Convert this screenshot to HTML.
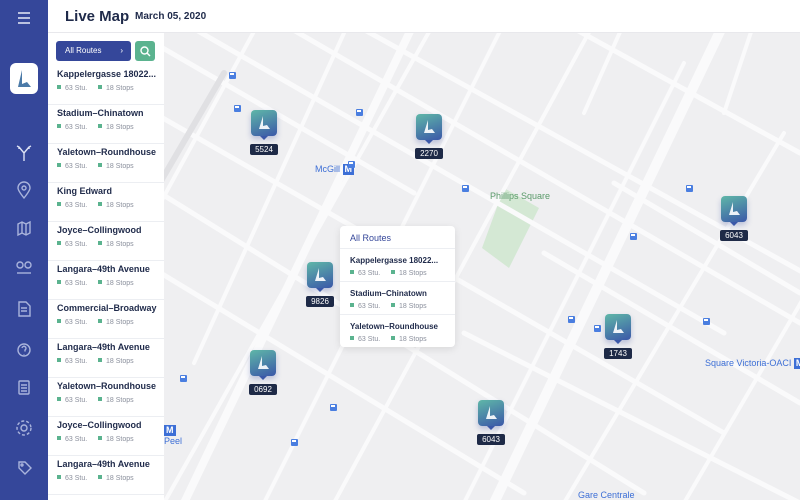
<!DOCTYPE html>
<html><head><meta charset="utf-8"><style>
*{margin:0;padding:0;box-sizing:border-box}
html,body{width:800px;height:500px;overflow:hidden}
body{font-family:"Liberation Sans",sans-serif;background:#efeff1;position:relative}
.side{position:absolute;left:0;top:0;width:48px;height:500px;background:#35479a}
.hdr{position:absolute;left:48px;top:0;width:752px;height:33px;background:#fff;border-bottom:1px solid #e8e8ec}
.hdr .t{position:absolute;left:17px;top:8px;font-size:15px;font-weight:bold;color:#1f2a4a}
.hdr .d{position:absolute;left:87px;top:11px;font-size:10px;font-weight:bold;color:#1f2a4a}
.list{position:absolute;left:48px;top:33px;width:116px;height:467px;background:#fff;overflow:hidden}
.btn{position:absolute;left:8px;top:8px;width:75px;height:20px;background:#35479a;border-radius:3px;color:#fff;font-size:8px;line-height:20px;padding-left:9px}
.btn span{position:absolute;right:8px}
.sbtn{position:absolute;left:87px;top:8px;width:20px;height:20px;background:#5bb38f;border-radius:3px}
.it{position:absolute;left:0;width:116px;height:39px;border-bottom:1px solid #eceef2}
.it b{position:absolute;left:9px;top:3px;font-size:9px;color:#1f2a4a;white-space:nowrap}
.it i,.pp i{font-style:normal;font-size:7px;color:#8a8f9c;position:absolute;top:19px;white-space:nowrap}
.it i:before,.pp i:before{content:"";display:inline-block;width:4px;height:4px;background:#5bb38f;margin-right:4px;vertical-align:1px}
.map{position:absolute;left:164px;top:33px;width:636px;height:467px;overflow:hidden}
.mk{position:absolute;width:26px}
.mk .ic{width:26px;height:26px;border-radius:4px;background:linear-gradient(160deg,#5fb7a8,#3b58a8);position:relative;box-shadow:0 3px 6px rgba(60,80,160,.3)}
.mk .ic:after{content:"";position:absolute;left:9px;bottom:-4px;border:4px solid transparent;border-top-color:#3b58a8;border-bottom:0}
.mk .ic svg{position:absolute;left:6px;top:5px}
.mk .lb{position:absolute;left:-1px;top:34px;width:28px;height:11px;background:#1e2a47;color:#fff;font-size:8px;text-align:center;line-height:11px;border-radius:2px}
.pp{position:absolute;left:340px;top:226px;width:115px;height:121px;background:#fff;border-radius:4px;box-shadow:0 2px 8px rgba(0,0,0,.1)}
.pp .h{position:absolute;left:10px;top:7px;font-size:9px;color:#35479a}
.pp .r{position:absolute;left:0;width:115px;height:33px;border-top:1px solid #eceef2}
.pp .r b{position:absolute;left:10px;top:7px;font-size:8px;color:#1f2a4a;white-space:nowrap}
.pp i{top:21px}
.lbl{position:absolute;font-size:9px;color:#3d6fd6;white-space:nowrap}
.m{display:inline-block;background:#3d6fd6;color:#fff;padding:0 2px;font-weight:bold;font-size:9px;line-height:11px}
.bus{position:absolute;width:7px;height:7px;border-radius:1px;background:#4a7ee0;border:1.5px solid #4a7ee0}
.bus:after{content:"";position:absolute;left:0;top:0;width:4px;height:2px;background:#fff}
</style></head><body>
<div class="side">
<svg width="48" height="500" fill="none" stroke="#aab4dc" stroke-width="1.4">
<path d="M18 13h12M18 18h12M18 23h12" stroke="#e8ecf8"/>
<rect x="10" y="63" width="28" height="31" rx="6" fill="#fff" stroke="none"/>
<path d="M22 70 L18 87 L31 87 L27 82 L22 84 Z" fill="#4b7aa8" stroke="none"/>
<path d="M24 161v-8M24 153l-5-6M24 153l5-6M17 146l2 1 0 2M31 146l-2 1 0 2" stroke="#dde2f4"/>
<path d="M24 198c-4-5-6-8-6-10a6 6 0 0 1 12 0c0 2-2 5-6 10z"/><circle cx="24" cy="188" r="2"/>
<path d="M18 224l4-2 4 2 4-2v11l-4 2-4-2-4 2z M22 222v11M26 224v11"/>
<circle cx="20" cy="265" r="3"/><circle cx="28" cy="265" r="3"/><path d="M17 273h14"/>
<path d="M19 302h7l4 4v10h-11z M21 308h6M21 311h6"/>
<circle cx="24" cy="350" r="6"/><path d="M22 348a2 2 0 1 1 3 2v1.5M24 354v.5"/>
<rect x="19" y="381" width="10" height="13" rx="1"/><path d="M21 385h6M21 388h6M21 391h6"/>
<circle cx="24" cy="428" r="3"/><circle cx="24" cy="428" r="7" stroke-dasharray="3 2"/>
<path d="M19 462h6l6 6-6 6-6-6z"/><circle cx="22" cy="465" r="1"/>
</svg></div>
<div class="hdr"><div class="t">Live Map</div><div class="d">March 05, 2020</div></div>
<div class="list">
<div class="btn">All Routes<span>›</span></div>
<div class="sbtn"><svg width="20" height="20" fill="none" stroke="#fff" stroke-width="1.4"><circle cx="9.5" cy="9.5" r="3.5"/><path d="M12 12l3 3"/></svg></div>
<div class="it" style="top:33px"><b>Kappelergasse 18022...</b><i style="left:9px">63 Stu.</i><i style="left:50px">18 Stops</i></div>
<div class="it" style="top:72px"><b>Stadium–Chinatown</b><i style="left:9px">63 Stu.</i><i style="left:50px">18 Stops</i></div>
<div class="it" style="top:111px"><b>Yaletown–Roundhouse</b><i style="left:9px">63 Stu.</i><i style="left:50px">18 Stops</i></div>
<div class="it" style="top:150px"><b>King Edward</b><i style="left:9px">63 Stu.</i><i style="left:50px">18 Stops</i></div>
<div class="it" style="top:189px"><b>Joyce–Collingwood</b><i style="left:9px">63 Stu.</i><i style="left:50px">18 Stops</i></div>
<div class="it" style="top:228px"><b>Langara–49th Avenue</b><i style="left:9px">63 Stu.</i><i style="left:50px">18 Stops</i></div>
<div class="it" style="top:267px"><b>Commercial–Broadway</b><i style="left:9px">63 Stu.</i><i style="left:50px">18 Stops</i></div>
<div class="it" style="top:306px"><b>Langara–49th Avenue</b><i style="left:9px">63 Stu.</i><i style="left:50px">18 Stops</i></div>
<div class="it" style="top:345px"><b>Yaletown–Roundhouse</b><i style="left:9px">63 Stu.</i><i style="left:50px">18 Stops</i></div>
<div class="it" style="top:384px"><b>Joyce–Collingwood</b><i style="left:9px">63 Stu.</i><i style="left:50px">18 Stops</i></div>
<div class="it" style="top:423px"><b>Langara–49th Avenue</b><i style="left:9px">63 Stu.</i><i style="left:50px">18 Stops</i></div>
</div>
<div class="map">
<svg width="636" height="467" style="position:absolute;left:0;top:0" stroke="#fafafb" fill="none" stroke-linecap="round">
<polygon points="340,155 375,175 345,235 318,215" fill="#d4e8d4" stroke="none"/>
<g stroke-width="5">
<path d="M-10 10 L250 160 M20 -10 L560 300 M170 -20 L640 240 M100 -20 L636 290 M-20 150 L480 460 M-20 230 L360 460 M-10 80 L200 200 M300 300 L636 470 M450 150 L636 260 M230 210 L560 400 M400 -10 L636 120 M380 220 L636 370"/>
</g>
<g stroke-width="4">
<path d="M100 -20 L-20 200 M180 0 L30 330 M270 -10 L0 470 M340 -10 L100 470 M430 -10 L170 470 M520 30 L300 470 M620 100 L400 470 M590 -10 L560 80 M660 230 L520 470 M460 -10 L420 80"/>
</g>
<path d="M560 -10 L330 470" stroke-width="10"/>
<path d="M250 -10 L20 470" stroke-width="8"/>
<path d="M60 40 L-10 160" stroke="#e0e0e3" stroke-width="6"/>
</svg>
<div class="lbl" style="left:151px;top:131px">McGill <span class="m">M</span></div>
<div class="lbl" style="left:326px;top:158px;color:#5a9a6a">Phillips Square</div>
<div class="lbl" style="left:541px;top:325px">Square Victoria-OACI <span class="m">M</span></div>
<div class="lbl" style="left:414px;top:457px">Gare Centrale</div>
<div class="lbl" style="left:0px;top:392px"><span class="m">M</span><br>Peel</div>
<div class="bus" style="left:65px;top:39px"></div><div class="bus" style="left:70px;top:72px"></div><div class="bus" style="left:192px;top:76px"></div><div class="bus" style="left:184px;top:128px"></div><div class="bus" style="left:298px;top:152px"></div><div class="bus" style="left:522px;top:152px"></div><div class="bus" style="left:466px;top:200px"></div><div class="bus" style="left:539px;top:285px"></div><div class="bus" style="left:404px;top:283px"></div><div class="bus" style="left:430px;top:292px"></div><div class="bus" style="left:127px;top:406px"></div><div class="bus" style="left:166px;top:371px"></div><div class="bus" style="left:16px;top:342px"></div><div class="bus" style="left:252px;top:193px"></div>
</div>
<div class="pp"><div class="h">All Routes</div>
<div class="r" style="top:22px"><b>Kappelergasse 18022...</b><i style="left:10px">63 Stu.</i><i style="left:51px">18 Stops</i></div>
<div class="r" style="top:55px"><b>Stadium–Chinatown</b><i style="left:10px">63 Stu.</i><i style="left:51px">18 Stops</i></div>
<div class="r" style="top:88px"><b>Yaletown–Roundhouse</b><i style="left:10px">63 Stu.</i><i style="left:51px">18 Stops</i></div>
</div>
<div class="mk" style="left:251px;top:110px"><div class="ic"><svg width="14" height="16"><path d="M6 1 L2 14 L13 14 L10 10 L6 11 Z" fill="#fff" opacity=".9"/></svg></div><div class="lb">5524</div></div>
<div class="mk" style="left:416px;top:114px"><div class="ic"><svg width="14" height="16"><path d="M6 1 L2 14 L13 14 L10 10 L6 11 Z" fill="#fff" opacity=".9"/></svg></div><div class="lb">2270</div></div>
<div class="mk" style="left:307px;top:262px"><div class="ic"><svg width="14" height="16"><path d="M6 1 L2 14 L13 14 L10 10 L6 11 Z" fill="#fff" opacity=".9"/></svg></div><div class="lb">9826</div></div>
<div class="mk" style="left:721px;top:196px"><div class="ic"><svg width="14" height="16"><path d="M6 1 L2 14 L13 14 L10 10 L6 11 Z" fill="#fff" opacity=".9"/></svg></div><div class="lb">6043</div></div>
<div class="mk" style="left:605px;top:314px"><div class="ic"><svg width="14" height="16"><path d="M6 1 L2 14 L13 14 L10 10 L6 11 Z" fill="#fff" opacity=".9"/></svg></div><div class="lb">1743</div></div>
<div class="mk" style="left:250px;top:350px"><div class="ic"><svg width="14" height="16"><path d="M6 1 L2 14 L13 14 L10 10 L6 11 Z" fill="#fff" opacity=".9"/></svg></div><div class="lb">0692</div></div>
<div class="mk" style="left:478px;top:400px"><div class="ic"><svg width="14" height="16"><path d="M6 1 L2 14 L13 14 L10 10 L6 11 Z" fill="#fff" opacity=".9"/></svg></div><div class="lb">6043</div></div>
</body></html>
